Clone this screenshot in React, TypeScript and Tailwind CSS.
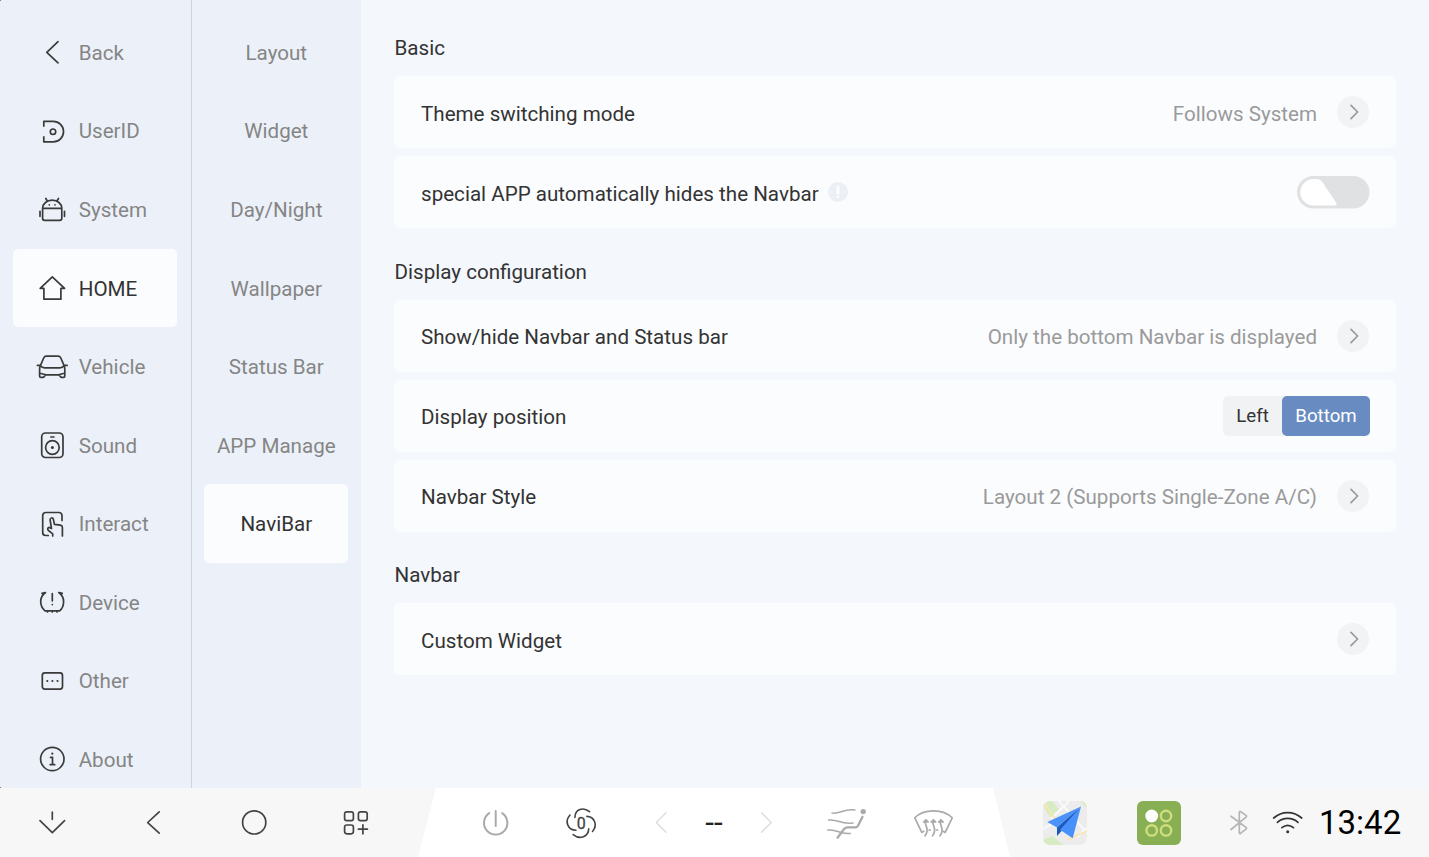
import type { ReactNode } from "react";
import clsx from "clsx";

type IconProps = { size?: number; className?: string; children: ReactNode };

function Icon({ size = 32, className, children }: IconProps) {
  return (
    <svg
      width={size}
      height={size}
      viewBox={`0 0 ${size} ${size}`}
      fill="none"
      stroke="currentColor"
      strokeWidth={1.7}
      strokeLinecap="round"
      strokeLinejoin="round"
      className={clsx("shrink-0", className)}
    >
      {children}
    </svg>
  );
}

const menu = [
  { name: "Back", icon: <path d="M22 5.6 10.8 16.300 22 26.800" /> },
  {
    name: "UserID",
    icon: (
      <>
        <path d="M7.8 11.8V6.300h9.500a10.200 10.200 0 0 1 0 20.500H7.800v-5.600" strokeLinecap="butt" />
        <circle cx="17" cy="16.700" r="2.700" />
      </>
    ),
  },
  {
    name: "System",
    icon: (
      <>
        <path d="M6.600 15.300a9.600 8.200 0 0 1 19.200 0v10a2 2 0 0 1-2 2H8.600a2 2 0 0 1-2-2zH25.800M9.800 5.500l1.500 2.500M22.500 5.500l-1.600 2.500M4 18.300v5M28.500 18.300v5" />
        <path d="M13.300 11.800h.01M19 11.800h.01" />
      </>
    ),
  },
  { name: "HOME", icon: <path d="M16.300 4.900 4.200 16.300h3.700v10.900h17V16.300h3.700z" /> },
  {
    name: "Vehicle",
    icon: (
      <>
        <path d="M4.400 14.600 7.700 7a3 3 0 0 1 2.700-1.800h11.700A3 3 0 0 1 24.800 7l3.300 7.600M1.400 14.400h2.800c1.400 1.800 2.600 2.400 4.500 2.400h15.100c1.900 0 3.100-.6 4.500-2.400h2.800" />
        <path d="M4.200 14.800c-.5 1.300-.6 2.600-.6 4V25c0 1 .4 1.400 1.200 1.400h2.300c1.100 0 1.600-2.500 3-2.500h12.400c1.400 0 1.900 2.500 3 2.500h2.100c.8 0 1.200-.4 1.200-1.400v-6.200c0-1.400-.1-2.700-.6-4M4 22.300l5.800 1.500M28.400 22.300l-5.800 1.500" />
      </>
    ),
  },
  {
    name: "Sound",
    icon: (
      <>
        <rect x="5.700" y="4" width="21.300" height="24.500" rx="3.800" />
        <circle cx="16.400" cy="18.500" r="6.800" />
        <circle cx="16.400" cy="18.500" r="1.500" fill="currentColor" stroke="none" />
        <path d="M14.900 8h3" />
      </>
    ),
  },
  {
    name: "Interact",
    icon: (
      <>
        <path d="M26 12.500v-5a3 3 0 0 0-3-3H9.700a3 3 0 0 0-3 3v17a3 3 0 0 0 3 3h2.600" />
        <path d="M16.700 28v-2.200l-4.200-3.300c-1.500-1.300-.8-3.300 1-3l2 1.100-1.400-8.600c-.2-2.400 2.800-2.800 3.300-.5l1 4.800 6 .9c1.400.3 2 1.100 2 2.400V28" />
      </>
    ),
  },
  {
    name: "Device",
    icon: (
      <path d="M6 7.400l3.500-.9C5.800 9.200 4.700 12.700 4.700 15.600c0 4 1.900 7.400 4.300 9.300h14.600c2.400-1.900 4-5.300 4-9.300 0-2.900-1.100-6.400-4.800-9.100l3.500.9M11.500 25.200v.8M16.300 25.200v.8M21 25.200v.8M16.300 7.600v7.200M16.300 18.600h.01" />
    ),
  },
  {
    name: "Other",
    icon: (
      <>
        <rect x="6.300" y="7.900" width="20.200" height="16.200" rx="2.500" />
        <path d="M11.300 16h.01M16.400 16h.01M21.500 16h.01" strokeWidth="2.200" />
      </>
    ),
  },
  {
    name: "About",
    icon: (
      <>
        <circle cx="16.300" cy="16" r="11.700" />
        <path d="M14.500 14.300h2v7.400M14.200 21.700h4.500" />
        <path d="M16.300 10.700h.01" strokeWidth="2.200" />
      </>
    ),
  },
];

const tabs = ["Layout", "Widget", "Day/Night", "Wallpaper", "Status Bar", "APP Manage", "NaviBar"];

function Row({ label, children }: { label: ReactNode; children: ReactNode }) {
  return (
    <div className="flex h-[72px] items-center justify-between rounded-[5px] bg-[#fbfcfe] pr-[26px] pl-[27px]">
      <div className="flex items-center gap-[9px] pt-[2.6px] text-[#333]">{label}</div>
      {children}
    </div>
  );
}

function More({ value }: { value?: string }) {
  return (
    <div className="flex items-center gap-5 pr-px">
      <span className="pt-[2.6px] text-[#9a9a9a]">{value}</span>
      <span className="flex size-8 items-center justify-center rounded-full bg-[#f2f3f5] text-[#999]">
        <Icon>
          <path d="m14 9.400 6.600 6.600-6.600 6.600" />
        </Icon>
      </span>
    </div>
  );
}

function Section({ title, children }: { title: string; children: ReactNode }) {
  return (
    <section>
      <h2 className="mb-[16px] h-6 pl-[0.5px] leading-6 text-[#333]">{title}</h2>
      <div className="flex flex-col gap-2">{children}</div>
    </section>
  );
}

function BottomBar() {
  return (
    <footer className="flex h-[69px] bg-[#f7f7f7] text-[#444]">
      <div className="flex w-[406px] items-center pl-px">
        <div className="flex flex-1 justify-center">
          <Icon size={40}>
            <path d="M20.300 9v7.300M8 17.600l12.300 12 12.300-12" />
          </Icon>
        </div>
        <div className="flex flex-1 justify-center">
          <Icon size={40}>
            <path d="M26.200 8.800 14.700 19.500l11.500 10.600" />
          </Icon>
        </div>
        <div className="flex flex-1 justify-center">
          <Icon size={40}>
            <circle cx="20.200" cy="19.400" r="11.600" />
          </Icon>
        </div>
        <div className="flex flex-1 justify-center">
          <Icon size={40}>
            <rect x="9.600" y="8.800" width="8.800" height="8.800" rx="2.200" />
            <rect x="23.400" y="8.800" width="8.800" height="8.800" rx="2.200" />
            <rect x="9.600" y="22" width="8.800" height="8.800" rx="2.200" />
            <path d="M27.900 21.800v9M23.400 26.200h9" />
          </Icon>
        </div>
      </div>

      <div className="ml-[12px] flex w-[593px] items-center bg-white pl-[34px] [clip-path:polygon(18px_0,575px_0,592px_100%,0_100%)]">
        <div className="flex w-[86px] justify-center text-[#aaa]">
          <Icon size={40}>
            <path d="M14.200 10.100a11.700 11.700 0 1 0 13 0M20.700 8v15" strokeWidth="2" />
          </Icon>
        </div>
        <div className="flex w-[86px] justify-center">
          <Icon size={40}>
            <path
              d="M13.900 14.500C14 6.700 22 3.200 28.500 8.700M25.800 13.400c7.500.3 11.300 8.300 5.700 15M27.700 25.900c-.3 8-8.700 11.200-15.500 5.700M15 27.200c-7.800 0-12-8.500-6-15.200"
              strokeWidth="1.600"
            />
            <text
              x="20.300"
              y="26"
              textAnchor="middle"
              fontSize="16"
              fill="currentColor"
              strokeWidth="0.300"
            >
              0
            </text>
          </Icon>
        </div>
        <div className="flex w-[180px] items-center justify-center gap-3">
          <Icon size={40} className="text-[#dedede]">
            <path d="M24 9.800 14.300 19.500l9.700 9.700" strokeWidth="1.500" />
          </Icon>
          <span className="w-[40px] text-center text-[31.500px] leading-10 text-[#222]">--</span>
          <Icon size={40} className="text-[#dedede]">
            <path d="m15.500 9.800 9.700 9.700-9.700 9.700" strokeWidth="1.500" />
          </Icon>
        </div>
        <div className="flex w-[86px] justify-center text-[#aaa]">
          <Icon size={40}>
            <circle cx="36.200" cy="8.600" r="2.700" fill="currentColor" stroke="none" />
            <path d="M35.500 13.700 31 22.700c-.7 1.300-1.700 1.600-3 1.600h-7c-2.200 0-3.400.6-4.500 2.400l-6 8" strokeWidth="2.300" />
            <path
              d="M5 9.900c7 2 11-4.500 23-3M1.500 17c11-1 11 4.700 24.500 3M.8 27.100c10-1.500 10 4.600 22.500 3.300"
              strokeWidth="1.500"
            />
          </Icon>
        </div>
        <div className="flex w-[86px] justify-center text-[#aaa]">
          <Icon size={40}>
            <path d="M10.800 28.300 8.800 29.400 1.800 14.800C6 10.300 12.500 7.800 20.500 7.800S35 10.300 39.200 14.800l-7 14.600-2-1.100M16 27h1.200M23.500 27h1.200" />
            <path d="M12.800 17.300c-2 4 2.200 6.500 1.200 11-.2 1.500-.8 3-2 4.500M20.300 17.300c-2 4 2.200 6.500 1.200 11-.2 1.500-.8 3-2 4.500M27.800 17.300c-2 4 2.200 6.500 1.200 11-.2 1.500-.8 3-2 4.500" />
            <path d="m10.600 19 2.300-2.200 2.300 2.200zM18.100 19l2.300-2.200 2.300 2.200zM25.600 19l2.300-2.200 2.300 2.200z" fill="currentColor" />
          </Icon>
        </div>
      </div>

      <div className="flex flex-1 items-center pl-[32px]">
        <svg width="44" height="44" viewBox="0 0 44 44" className="shrink-0 rounded-[7px]">
          <rect width="44" height="44" fill="#ececec" />
          <path d="M0 5 5 0h4l8 9-8 10zM0 44v-5l9-4 12 9zM37 0h7v7z" fill="#d8ecc4" />
          <path d="M8 18 26 0M34 36l10-9M16 0l28 32M0 28l12-7" stroke="#f8f8f8" strokeWidth="2.500" />
          <path d="m1 2 12 17M24 39l20-9" stroke="#fbe5ab" strokeWidth="1.800" />
          <path d="M38 5.500 4.300 21 14 26.500z" fill="#4b93fb" />
          <path d="M38 5.500 14 26.500V35l5-5.500z" fill="#1c58bd" />
          <path d="M38 5.500 17 28.800l12.700 8.400z" fill="#4890fa" />
        </svg>
        <svg width="44" height="44" viewBox="0 0 44 44" className="ml-[50px] shrink-0 rounded-[6px]">
          <rect width="44" height="44" fill="#88af54" />
          <circle cx="14.700" cy="15" r="6.400" fill="#fff" />
          <g fill="none" stroke="#cfde7c" strokeWidth="2.400">
            <circle cx="29" cy="15" r="5.200" />
            <circle cx="14.700" cy="29.400" r="5.200" />
            <circle cx="29" cy="29.400" r="5.200" />
          </g>
        </svg>
        <Icon size={40} className="ml-[38px] text-[#b5b5b5]">
          <path d="m12 13.200 15 11.200q1 .9 0 1.800l-5.200 4q-1.500 1-1.500-.8V9.500q0-1.800 1.500-.8l5.200 3.700q1 .9 0 1.800L12 26.500" />
        </Icon>
        <Icon size={40} className="ml-[9px] text-[#333]">
          <path d="M5.700 15c8-7.300 20-7.300 28 0M9.400 19.400c6-5.300 14.600-5.300 20.600 0M13.900 24.700c3.600-3 8-3 11.600 0" />
          <circle cx="19.700" cy="28.700" r="1.500" fill="currentColor" stroke="none" />
        </Icon>
        <span className="ml-[11px] text-[33px] leading-10 text-black">13:42</span>
      </div>
    </footer>
  );
}

export default function App() {
  return (
    <div className="flex h-[857px] w-[1429px] flex-col overflow-hidden bg-black font-['Roboto',sans-serif] text-[20.6px] leading-6">
      <div className="flex h-[788px] overflow-hidden rounded-l-[2px] bg-[#f4f7fc]">
        <nav className="w-[192px] shrink-0 border-r border-[#cdd3df] bg-[#ecf1f9] pt-[13px] pl-[13px]">
          {menu.map((item) => {
            const isActive = item.name === "HOME";
            return (
              <div
                key={item.name}
                className={clsx(
                  "flex h-[78.57px] w-[164px] items-center gap-[10.7px] rounded-[5px] pl-[23px]",
                  isActive ? "bg-[#fbfcfe] text-[#333]" : "text-[#858585]"
                )}
              >
                <Icon className="text-[#3a3a3a]">{item.icon}</Icon>
                <span className="pt-[1.2px]">{item.name}</span>
              </div>
            );
          })}
        </nav>

        <nav className="w-[169px] shrink-0 bg-[#ecf1f9] pt-[13px] pl-[12px]">
          {tabs.map((tab) => (
            <div
              key={tab}
              className={clsx(
                "flex h-[78.57px] w-[144px] items-center justify-center rounded-[5px] pt-[1.2px] pl-[0.6px]",
                tab === "NaviBar" ? "bg-[#fbfcfe] text-[#333]" : "text-[#858585]"
              )}
            >
              {tab}
            </div>
          ))}
        </nav>

        <main className="flex flex-1 flex-col gap-[31.5px] pt-[36.4px] pr-[33px] pl-[33px]">
          <Section title="Basic">
            <Row label="Theme switching mode">
              <More value="Follows System" />
            </Row>
            <Row
              label={
                <>
                  <span>special APP automatically hides the Navbar</span>
                  <svg width="20" height="20" viewBox="0 0 20 20" className="mb-[3px]">
                    <circle cx="10" cy="10" r="10" fill="#eceff5" />
                    <path d="M10 5v6.500M10 15h.01" stroke="#fff" strokeWidth="2.600" strokeLinecap="round" />
                  </svg>
                </>
              }
            >
              <svg width="73" height="33" viewBox="0 0 73 33">
                <rect width="72.500" height="32.500" rx="16.250" fill="#e0e1e3" />
                <path d="M16.500 3H19q4.500 0 7 4l13.300 20q1 2.500-1.500 2.500H16.500a13.250 13.250 0 0 1 0-26.500z" fill="#fff" />
              </svg>
            </Row>
          </Section>

          <Section title="Display configuration">
            <Row label="Show/hide Navbar and Status bar">
              <More value="Only the bottom Navbar is displayed" />
            </Row>
            <Row label="Display position">
              <div className="flex h-10 rounded-[5px] bg-[#f1f2f4] text-[18.7px]">
                <span className="flex w-[59px] items-center justify-center text-[#333]">Left</span>
                <span className="flex w-[88px] items-center justify-center rounded-[5px] bg-[#688cc1] text-white">
                  Bottom
                </span>
              </div>
            </Row>
            <Row label="Navbar Style">
              <More value="Layout 2 (Supports Single-Zone A/C)" />
            </Row>
          </Section>

          <Section title="Navbar">
            <Row label="Custom Widget">
              <More />
            </Row>
          </Section>
        </main>
      </div>
      <BottomBar />
    </div>
  );
}
